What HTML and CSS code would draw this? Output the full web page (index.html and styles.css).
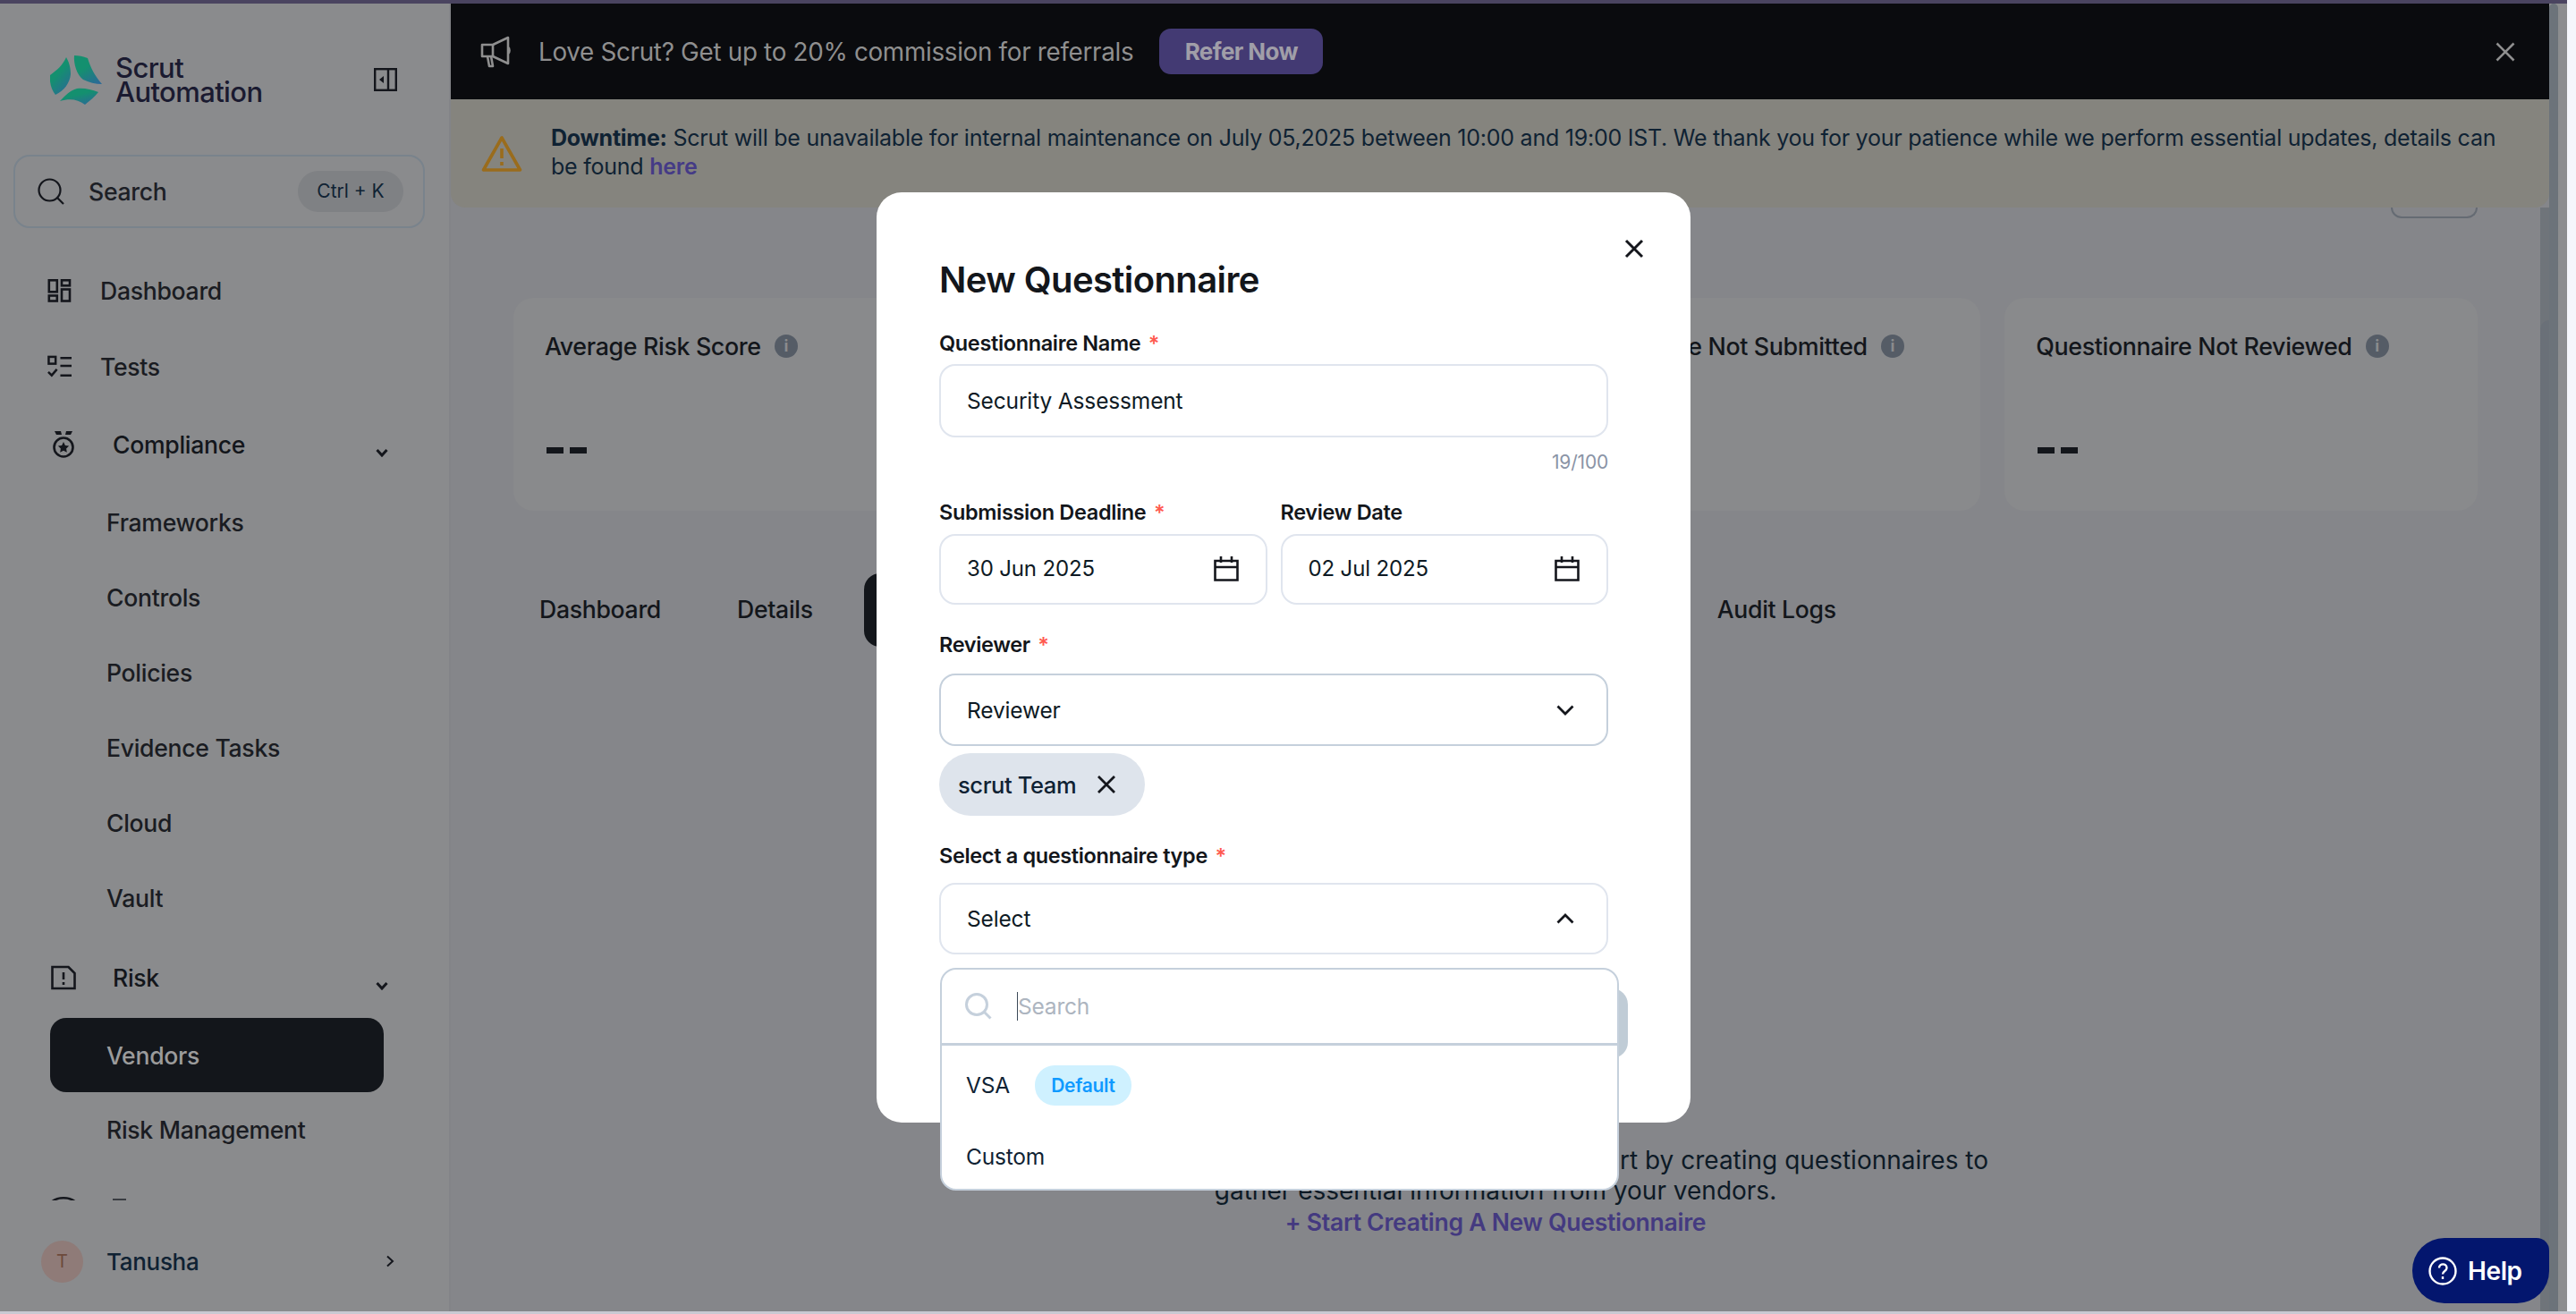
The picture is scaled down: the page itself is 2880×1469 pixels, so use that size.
FILE: index.html
```html
<!DOCTYPE html>
<html lang="en">
<head>
    <meta charset="UTF-8">
    <title>Scrut Automation - Vendors</title>
    <link rel="stylesheet" href="styles.css">
</head>
<body>
    <div class="top-strip"></div>
    <div class="app">
        <aside class="sidebar">
            <div class="brand">
                <svg class="brand-logo" viewBox="16 11 58 55" width="58" height="55">
                    <defs>
                        <linearGradient id="logoGrad" x1="0.2" y1="0" x2="0.8" y2="1">
                            <stop offset="0.4" stop-color="#14906f"/>
                            <stop offset="1" stop-color="#2a6a96"/>
                        </linearGradient>
                    </defs>
                    <path fill="url(#logoGrad)" d="M34 13C30 22 24 27 16 33C15 42 18 50 22 55C32 50 38 42 39 32C39 24 37 18 34 13Z"/>
                    <path fill="url(#logoGrad)" d="M43 11C42 20 46 33 53 38C59 41 67 43 74 43C66 34 61 24 58 14C53 12 48 11 43 11Z"/>
                    <path fill="url(#logoGrad)" d="M27 62C33 56 38 50 46 48C54 47 62 49 70 52C66 57 60 62 55 66C47 60 38 59 27 62Z"/>
                </svg>
                <div class="brand-name">Scrut<br>Automation</div>
                <svg class="collapse-icon" viewBox="0 0 26 26" width="26" height="26" fill="none" stroke="#14161c" stroke-width="2.4">
                    <rect x="1.2" y="1.2" width="23.6" height="23.6"/>
                    <path d="M16 1v24"/>
                    <path d="M11 9v8l-5-4z" fill="#14161c" stroke="none"/>
                </svg>
            </div>
            <div class="side-search">
                <svg viewBox="0 0 30 30" width="30" height="30" fill="none" stroke="#14161c" stroke-width="2.2">
                    <circle cx="13.5" cy="13.5" r="12"/>
                    <path d="M22.5 22.5l6.5 6.5"/>
                </svg>
                <span class="side-search-text">Search</span>
                <span class="kbd">Ctrl + K</span>
            </div>
            <nav class="nav">
                <a class="nav-item">
                    <svg class="nav-icon" viewBox="0 0 26 26" width="26" height="26" fill="none" stroke="#14161c" stroke-width="2.6">
                        <rect x="1.3" y="1.3" width="9" height="13"/><rect x="15.5" y="1.3" width="9" height="6"/>
                        <rect x="1.3" y="18.5" width="9" height="6"/><rect x="15.5" y="11.5" width="9" height="13"/>
                    </svg>
                    Dashboard
                </a>
                <a class="nav-item">
                    <svg class="nav-icon" viewBox="0 0 28 26" width="28" height="26" fill="none" stroke="#14161c" stroke-width="2.6">
                        <rect x="1.5" y="1.5" width="8" height="8"/><path d="M15 3h13M15 12h13M15 23h13"/>
                        <path d="M1 19l4 4 6-7"/>
                    </svg>
                    Tests
                </a>
                <a class="nav-item nav-group">
                    <svg class="group-icon" viewBox="0 0 26 32" width="26" height="32" fill="none" stroke="#14161c" stroke-width="2.6">
                        <path d="M3 1h7l1 4H5zM16 1h7l-2 4h-6z" fill="#14161c" stroke="none"/>
                        <circle cx="13" cy="19" r="10.5"/>
                        <path d="M13 13l1.9 3.9 4.2.6-3 3 .7 4.2-3.8-2-3.8 2 .7-4.2-3-3 4.2-.6z" fill="#14161c" stroke="none"/>
                    </svg>
                    Compliance
                    <svg class="group-caret" viewBox="0 0 14 10" width="14" height="10" fill="none" stroke="#14161c" stroke-width="3"><path d="M1.5 2l5.5 6 5.5-6"/></svg>
                </a>
                <a class="nav-item nav-sub">Frameworks</a>
                <a class="nav-item nav-sub">Controls</a>
                <a class="nav-item nav-sub">Policies</a>
                <a class="nav-item nav-sub">Evidence Tasks</a>
                <a class="nav-item nav-sub">Cloud</a>
                <a class="nav-item nav-sub">Vault</a>
                <a class="nav-item nav-group nav-risk">
                    <svg class="group-icon" viewBox="0 0 28 28" width="28" height="28" fill="none" stroke="#14161c" stroke-width="2.6">
                        <path d="M1.5 2h18l7 7v17h-25z"/>
                        <path d="M14 8v8M14 19v3"/>
                    </svg>
                    Risk
                    <svg class="group-caret" viewBox="0 0 14 10" width="14" height="10" fill="none" stroke="#14161c" stroke-width="3"><path d="M1.5 2l5.5 6 5.5-6"/></svg>
                </a>
                <a class="nav-item nav-sub active">Vendors</a>
                <a class="nav-item nav-sub">Risk Management</a>
                <div class="nav-clipped">
                    <svg class="group-icon" viewBox="0 0 28 28" width="28" height="28" fill="none" stroke="#14161c" stroke-width="2.6">
                        <path d="M1.5 6C8 1 20 1 26.5 6v20h-25z"/>
                    </svg>
                    <span class="clipped-label"></span>
                </div>
            </nav>
            <div class="user-row">
                <span class="avatar">T</span>
                <span class="user-name">Tanusha</span>
                <svg viewBox="0 0 9 14" width="9" height="14" fill="none" stroke="#14161c" stroke-width="2"><path d="M1 1.5l6 5.5-6 5.5"/></svg>
            </div>
        </aside>

        <main class="page">
            <div class="banner">
                <svg class="banner-icon" viewBox="0 0 36 36" width="36" height="36" fill="none" stroke="#8f8f8f" stroke-width="2.6" stroke-linejoin="round">
                    <path d="M32 2L15 10H3v13h12l17 8z"/>
                    <path d="M9 23l2 11h4l-2-11M32 13c2 1 2 6 0 7"/>
                    <path d="M15 10v13"/>
                </svg>
                <span class="banner-text">Love Scrut? Get up to 20% commission for referrals</span>
                <button class="refer-btn">Refer Now</button>
                <svg class="banner-close" viewBox="0 0 22 22" width="22" height="22" stroke="#8f8f8f" stroke-width="2.6"><path d="M1.5 1.5l19 19M20.5 1.5l-19 19"/></svg>
            </div>
            <div class="notice">
                <svg class="notice-icon" viewBox="0 0 46 42" width="46" height="42" fill="none" stroke="#9a6c1c" stroke-width="3.6" stroke-linejoin="round">
                    <path d="M23 3L2.5 39h41z"/>
                    <path d="M23 15v11M23 30v4"/>
                </svg>
                <p class="notice-text"><b>Downtime:</b> Scrut will be unavailable for internal maintenance on July 05,2025 between 10:00 and 19:00 IST. We thank you for your patience while we perform essential updates, details can<br>be found <a class="notice-link">here</a></p>
            </div>
            <div class="body">
                <div class="head-row"><span class="head-btn"></span></div>
                <div class="cards">
                    <div class="card">
                        <div class="card-title">Average Risk Score <span class="info">i</span></div>
                        <div class="dashes"><i></i><i></i></div>
                    </div>
                    <div class="card"></div>
                    <div class="card">
                        <div class="card-title card-title-shift">Questionnaire Not Submitted <span class="info">i</span></div>
                    </div>
                    <div class="card">
                        <div class="card-title">Questionnaire Not Reviewed <span class="info">i</span></div>
                        <div class="dashes"><i></i><i></i></div>
                    </div>
                </div>
                <div class="tabs">
                    <span class="tab">Dashboard</span>
                    <span class="tab">Details</span>
                    <span class="tab tab-active"></span>
                    <span class="tab tab-last">Audit Logs</span>
                </div>
                <div class="empty">
                    <p>Streamline your vendor risk work and get a head start by creating questionnaires to<br>gather essential information from your vendors.</p>
                    <a class="empty-link">+ Start Creating A New Questionnaire</a>
                </div>
            </div>
            <div class="inner-track"></div>
            <div class="inner-thumb"></div>
        </main>
        <div class="gutter"><div class="gutter-thumb"></div></div>
    </div>
    <div class="bottom-strip"></div>

    <section class="modal">
        <svg class="modal-close" viewBox="0 0 22 22" width="22" height="22" stroke="#14161c" stroke-width="3"><path d="M2 2l18 18M20 2L2 20"/></svg>
        <h2 class="modal-title">New Questionnaire</h2>

        <label class="label">Questionnaire Name <em>*</em></label>
        <div class="box box-name">Security Assessment</div>
        <div class="count">19/100</div>

        <div class="date-row">
            <div class="date-col">
                <label class="label">Submission Deadline <em>*</em></label>
                <div class="box box-date">30 Jun 2025
                    <svg viewBox="0 0 28 28" width="28" height="28" fill="none" stroke="#14161c" stroke-width="2.6"><path d="M1.5 5h25v21.5h-25zM1.5 12h25M8 0v7M20 0v7"/></svg>
                </div>
            </div>
            <div class="date-col">
                <label class="label">Review Date</label>
                <div class="box box-date">02 Jul 2025
                    <svg viewBox="0 0 28 28" width="28" height="28" fill="none" stroke="#14161c" stroke-width="2.6"><path d="M1.5 5h25v21.5h-25zM1.5 12h25M8 0v7M20 0v7"/></svg>
                </div>
            </div>
        </div>

        <label class="label label-reviewer">Reviewer <em>*</em></label>
        <div class="box box-select box-open">Reviewer
            <svg viewBox="0 0 20 12" width="20" height="12" fill="none" stroke="#14161c" stroke-width="2.8"><path d="M1.5 1.5L10 10l8.5-8.5"/></svg>
        </div>
        <div class="chip">scrut Team
            <svg viewBox="0 0 22 22" width="22" height="22" stroke="#14161c" stroke-width="2.8"><path d="M2 2l18 18M20 2L2 20"/></svg>
        </div>

        <label class="label label-type">Select a questionnaire type <em>*</em></label>
        <div class="box box-select box-type">Select
            <svg viewBox="0 0 20 12" width="20" height="12" fill="none" stroke="#14161c" stroke-width="2.8"><path d="M1.5 10.5L10 2l8.5 8.5"/></svg>
        </div>

        <div class="modal-submit"></div>

        <div class="dropdown">
            <div class="dd-search">
                <svg viewBox="0 0 30 30" width="30" height="30" fill="none" stroke="#c5d0dc" stroke-width="3"><circle cx="13" cy="13" r="11.5"/><path d="M21.5 21.5l7 7"/></svg>
                <span class="caret"></span>
                <span class="dd-placeholder">Search</span>
            </div>
            <div class="dd-option">VSA <span class="badge">Default</span></div>
            <div class="dd-option dd-custom">Custom</div>
        </div>
    </section>

    <button class="help-btn">
        <svg viewBox="0 0 32 32" width="32" height="32" fill="none" stroke="#fff" stroke-width="2.4"><circle cx="16" cy="16" r="14.5"/><path d="M12 12.5c0-5.5 8.5-5.5 8.5 0 0 3.5-4.5 3.5-4.5 7M16 22v3"/></svg>
        Help
    </button>
</body>
</html>
```

FILE: styles.css
```css
* {
    box-sizing: border-box;
    margin: 0;
    padding: 0;
}

body {
    width: 2880px;
    height: 1469px;
    overflow: hidden;
    position: relative;
    background: #f5f6fb;
    font-family: Inter, 'Noto Sans', sans-serif;
    color: #13161b;
}

.top-strip {
    height: 4px;
    width: 2870px;
    background: #4a4460;
}

.app {
    display: flex;
    width: 2870px;
    height: 1462px;
}

.bottom-strip {
    height: 3px;
    background: #c9c9d2;
}

/* sidebar */
.sidebar {
    width: 504px;
    flex-shrink: 0;
    display: flex;
    flex-direction: column;
    background: #8a8b8d;
    border-right: 2px solid #838488;
}

.brand {
    display: flex;
    align-items: center;
    height: 110px;
    margin-top: 30px;
    padding: 0 58px 0 56px;
}

.brand-logo {
    margin-right: 15px;
}

.brand-name {
    flex: 1;
    font-size: 31px;
    line-height: 27px;
    font-weight: 500;
    letter-spacing: -0.6px;
    color: #1a1a30;
}

.side-search {
    display: flex;
    align-items: center;
    width: 460px;
    height: 82px;
    margin: 29px 0 0 15px;
    padding: 0 22px 0 25px;
    border: 2px solid #79838c;
    border-radius: 18px;
}

.side-search-text {
    flex: 1;
    margin-left: 27px;
    font-size: 26.6px;
    font-weight: 500;
    color: #1d2026;
    letter-spacing: -0.3px;
}

.kbd {
    width: 118px;
    height: 46px;
    line-height: 46px;
    text-align: center;
    background: #7f8184;
    border-radius: 23px;
    font-size: 21px;
    color: #0f2233;
}

.nav {
    flex-shrink: 0;
    height: 1059px;
    margin-top: 28px;
    overflow: hidden;
}

.nav-item {
    display: flex;
    align-items: center;
    height: 84px;
    margin: 0 0 1px 53px;
    font-size: 26.6px;
    font-weight: 500;
    letter-spacing: -0.3px;
    color: #1a1c22;
}

.nav-icon {
    width: 27px;
    margin-right: 32px;
}

.nav-group {
    position: relative;
    margin: 3px 0 3px 57px;
    color: #13161b;
}

.nav-risk {
    margin-top: 5px;
}

.group-icon {
    flex-shrink: 0;
    width: 28px;
    margin-right: 41px;
}

.group-caret {
    position: absolute;
    left: 363px;
    top: 46px;
}

.nav-sub {
    margin: 0 0 0 56px;
    padding-left: 63px;
    width: 373px;
    border-radius: 18px;
}

.nav-sub.active {
    height: 83px;
    background: #13161b;
    color: #9b9b9b;
}

.nav-clipped {
    display: flex;
    align-items: flex-start;
    margin: 32px 0 0 57px;
}

.clipped-label {
    width: 15px;
    height: 2px;
    margin-top: 3px;
    background: #3a3c42;
}

.user-row {
    display: flex;
    align-items: center;
    height: 60px;
    margin: 38px 0 0 46px;
    padding-right: 61px;
}

.avatar {
    width: 47px;
    height: 47px;
    line-height: 47px;
    border-radius: 50%;
    text-align: center;
    background: #8f7b78;
    color: #6d4a3c;
    font-size: 20px;
}

.user-name {
    flex: 1;
    margin-left: 26px;
    font-size: 26px;
    font-weight: 500;
    letter-spacing: -0.3px;
    color: #0f2233;
}

/* page */
.page {
    position: relative;
    width: 2346px;
    flex-shrink: 0;
    background: #85868a;
    overflow: hidden;
}

.banner {
    display: flex;
    align-items: center;
    height: 107px;
    padding: 0 38px 0 32px;
    background: #0a0b0e;
}

.banner-text {
    margin-left: 30px;
    font-size: 27.8px;
    color: #8f8f8f;
    letter-spacing: -0.3px;
    white-space: nowrap;
}

.refer-btn {
    width: 183px;
    height: 51px;
    margin-left: 29px;
    border: none;
    border-radius: 13px;
    background: #433a73;
    color: #a09ea8;
    font-family: inherit;
    font-size: 26px;
    font-weight: 700;
    letter-spacing: -0.6px;
}

.banner-close {
    margin-left: auto;
}

.notice {
    display: flex;
    align-items: center;
    height: 121px;
    padding: 0 0 0 34px;
    background: #85847e;
    border-bottom-left-radius: 16px;
    border-bottom-right-radius: 16px;
}

.notice-icon {
    flex-shrink: 0;
}

.notice-text {
    margin: -3px 0 0 32px;
    font-size: 25px;
    line-height: 32px;
    color: #0f2233;
    white-space: nowrap;
    letter-spacing: -0.24px;
}

.notice-text b {
    font-weight: 700;
}

.notice-link {
    font-weight: 600;
    color: #453b86;
}

.body {
    padding: 0 80px 0 70px;
}

.head-row {
    display: flex;
    justify-content: flex-end;
    height: 101px;
}

.head-btn {
    width: 97px;
    height: 12px;
    border: 2px solid #656b73;
    border-top: none;
    border-radius: 0 0 12px 12px;
}

.cards {
    display: grid;
    grid-template-columns: repeat(4, 1fr);
    gap: 27px;
}

.card {
    height: 238px;
    padding: 36px 35px 0;
    background: #898a8c;
    border-radius: 22px;
}

.card-title {
    display: flex;
    align-items: center;
    height: 36px;
    font-size: 26.8px;
    font-weight: 500;
    letter-spacing: -0.35px;
    white-space: nowrap;
}

.card-title-shift {
    margin-left: 8px;
}

.info {
    width: 26px;
    height: 26px;
    margin-left: 15px;
    line-height: 26px;
    border-radius: 50%;
    background: #555c66;
    color: #8a8b8d;
    text-align: center;
    font-size: 18px;
    font-weight: 700;
}

.dashes {
    display: flex;
    gap: 7px;
    margin: 95px 0 0 2px;
}

.dashes i {
    width: 19px;
    height: 7px;
    background: #13161b;
}

.tabs {
    display: flex;
    gap: 27px;
    margin-top: 70px;
}

.tab {
    display: flex;
    align-items: center;
    height: 82px;
    padding: 0 29px 3px;
    font-size: 26.6px;
    font-weight: 500;
    letter-spacing: -0.3px;
    color: #13161b;
}

.tab-active {
    width: 300px;
    margin-left: 1px;
    border-radius: 18px;
    background: #13161b;
}

.tab-last {
    margin-left: 598px;
}

.empty {
    margin-top: 557px;
    text-align: center;
    white-space: nowrap;
}

.empty p {
    font-size: 28px;
    line-height: 34px;
    color: #0d1a26;
}

.empty-link {
    display: block;
    line-height: 36px;
    font-size: 26.6px;
    font-weight: 600;
    letter-spacing: -0.3px;
    color: #443a80;
}

.inner-track {
    position: absolute;
    top: 228px;
    right: 0;
    bottom: 0;
    width: 10px;
    background: #6f747a;
}

.inner-thumb {
    position: absolute;
    top: 354px;
    right: -10px;
    width: 20px;
    height: 1080px;
    border-radius: 10px;
    background: #6a7078;
    z-index: 2;
}

.gutter {
    position: relative;
    flex: 1;
    background: #8c8d8f;
}

.gutter-thumb {
    width: 10px;
    height: 100%;
    border-radius: 10px 10px 0 0;
    background: #6c737a;
}

/* modal */
.modal {
    position: absolute;
    left: 980px;
    top: 215px;
    width: 910px;
    height: 1040px;
    padding: 74px 92px 0 70px;
    background: #fff;
    border-radius: 28px;
}

.modal-close {
    position: absolute;
    top: 52px;
    left: 836px;
}

.modal-title {
    height: 48px;
    margin-bottom: 32px;
    font-size: 40px;
    line-height: 48px;
    font-weight: 600;
    letter-spacing: -0.6px;
}

.label {
    display: block;
    height: 30px;
    margin-bottom: 8px;
    line-height: 30px;
    font-size: 23.5px;
    font-weight: 600;
    letter-spacing: -0.35px;
    white-space: nowrap;
}

.label em {
    margin-left: 3px;
    font-style: normal;
    color: #ff5a4f;
}

.box {
    display: flex;
    align-items: center;
    justify-content: space-between;
    padding: 0 30px 0 29px;
    border: 2px solid #e0e5ee;
    border-radius: 18px;
    font-size: 24.5px;
    letter-spacing: -0.15px;
    color: #0e1a24;
}

.box-name {
    height: 82px;
}

.count {
    height: 28px;
    margin-top: 14px;
    line-height: 28px;
    text-align: right;
    font-size: 21px;
    letter-spacing: -0.2px;
    color: #8a94a6;
}

.date-row {
    display: flex;
    gap: 15px;
    margin-top: 27px;
}

.date-col {
    flex: 1;
}

.date-col .label {
    margin-bottom: 9px;
}

.box-date {
    height: 79px;
    padding-right: 30px;
    padding-bottom: 2px;
    font-size: 24px;
}

.label-reviewer {
    margin: 30px 0 17px;
}

.label-type {
    margin: 30px 0 15px;
}

.box-select {
    height: 80px;
    padding-right: 36px;
}

.box-open {
    height: 81px;
    border-color: #c5d0dc;
}

.chip {
    display: flex;
    align-items: center;
    gap: 23px;
    width: 230px;
    height: 70px;
    margin-top: 8px;
    padding-left: 21px;
    border-radius: 35px;
    background: #dee4ec;
    font-size: 25.5px;
    font-weight: 500;
    letter-spacing: -0.4px;
    color: #0f2233;
}

.modal-submit {
    position: absolute;
    right: 70px;
    top: 890px;
    width: 300px;
    height: 78px;
    border-radius: 18px;
    background: #c0ccd6;
}

.dropdown {
    position: absolute;
    left: 71px;
    top: 867px;
    width: 759px;
    height: 249px;
    overflow: hidden;
    background: #fff;
    border: 2px solid #c5d0dc;
    border-radius: 18px;
    z-index: 3;
}

.dd-search {
    display: flex;
    align-items: center;
    height: 85px;
    padding-left: 26px;
    border-bottom: 3px solid #c5d0dc;
}

.caret {
    width: 1px;
    height: 32px;
    margin-left: 28px;
    background: #3c4a58;
}

.dd-placeholder {
    font-size: 24.5px;
    letter-spacing: -0.2px;
    color: #adb5c0;
}

.dd-option {
    display: flex;
    align-items: center;
    gap: 28px;
    height: 78px;
    margin-top: 5px;
    padding-left: 27px;
    font-size: 24.5px;
    letter-spacing: -0.2px;
    color: #0f2233;
}

.dd-custom {
    margin-top: 2px;
}

.badge {
    width: 108px;
    height: 45px;
    line-height: 45px;
    text-align: center;
    border-radius: 22px;
    background: #cff1ff;
    color: #0f9aff;
    font-size: 21px;
    font-weight: 600;
    letter-spacing: -0.3px;
}

.help-btn {
    position: absolute;
    left: 2697px;
    top: 1384px;
    display: flex;
    align-items: center;
    gap: 12px;
    width: 153px;
    height: 73px;
    padding-left: 18px;
    border: none;
    border-radius: 36px 14px 36px 36px;
    background: #03166e;
    color: #fff;
    font-family: inherit;
    font-size: 28px;
    font-weight: 600;
    letter-spacing: -0.4px;
    z-index: 4;
}
```
